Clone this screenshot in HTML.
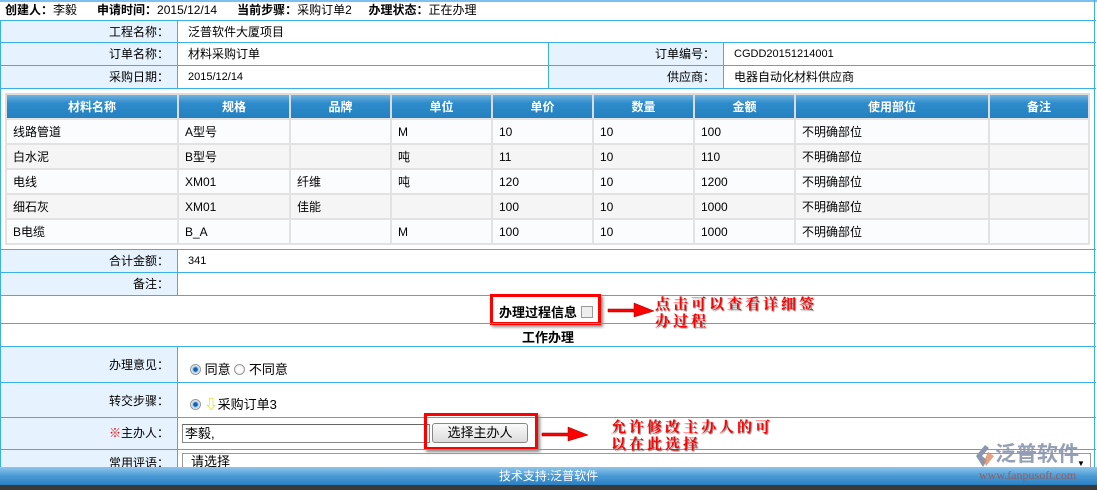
<!DOCTYPE html>
<html><head><meta charset="utf-8"><style>
*{margin:0;padding:0;box-sizing:border-box}
body{width:1097px;height:490px;overflow:hidden;background:#fff;font-family:"Liberation Sans","Noto Sans CJK SC","WenQuanYi Zen Hei",sans-serif;font-size:12px;color:#000;position:relative}
.a{position:absolute;white-space:nowrap}
.hl{position:absolute;left:0;width:1096px;height:1px;background:#3bb0e2}
.vl{position:absolute;width:1px;background:#3bb0e2}
.lab{position:absolute;background:#e6f2fd;text-align:right;padding-right:8px;line-height:22px}
.val{position:absolute;padding-left:10px;line-height:22px}
table{position:absolute;left:5px;top:93px;width:1085px;border-collapse:collapse;border:2px solid #dcdcdc}
th{height:25px;background:linear-gradient(#6fb3e0,#2f8ccc 35%,#2480bf);color:#fff;font-weight:bold;border-left:2px solid #dcdcdc;font-size:12px}
td{height:25px;border:2px solid #e2e2e2;padding-left:6px;font-size:12px}
tr:nth-child(even) td{background:#fbfcfe}
tr:nth-child(odd) td{background:#f5f5f5}
.red{position:absolute;border:3px solid #f00;box-shadow:2px 2px 3px #888}
.note{position:absolute;color:#f00;font-weight:bold;font-size:15px;letter-spacing:3px;line-height:17px;text-shadow:1px 1px 1px #888;font-family:"Noto Serif CJK SC",serif}
.radio{display:inline-block;width:11px;height:11px;border-radius:50%;border:1px solid #999;background:radial-gradient(circle,#fff 40%,#ddd);vertical-align:-1px}
.radio.on{background:radial-gradient(circle,#1a5fa8 30%,#8ec3ea 40%,#fff 75%)}
</style></head><body>
<div class="a" style="left:0;top:0;width:1097px;height:2px;background:#7cc0ee"></div>
<div class="a" style="left:5px;top:2px;line-height:16px;font-size:12px"><b>创建人：</b>李毅 &nbsp;&nbsp;&nbsp;&nbsp; <b>申请时间：</b>2015/12/14 &nbsp;&nbsp;&nbsp;&nbsp; <b>当前步骤：</b>采购订单2 &nbsp;&nbsp;&nbsp; <b>办理状态：</b>正在办理</div>

<div class="vl" style="left:0;top:20px;height:447px"></div>
<div class="vl" style="left:1094px;top:0;height:467px"></div>

<div class="lab" style="left:1px;top:21px;width:176px;height:21px">工程名称：</div>
<div class="lab" style="left:1px;top:43px;width:176px;height:22px">订单名称：</div>
<div class="lab" style="left:1px;top:66px;width:176px;height:22px">采购日期：</div>
<div class="lab" style="left:549px;top:43px;width:174px;height:22px">订单编号：</div>
<div class="lab" style="left:549px;top:66px;width:174px;height:22px">供应商：</div>
<div class="val" style="left:178px;top:21px">泛普软件大厦项目</div>
<div class="val" style="left:178px;top:43px">材料采购订单</div>
<div class="val" style="left:178px;top:66px;font-size:11px">2015/12/14</div>
<div class="val" style="left:724px;top:43px;font-size:11px">CGDD20151214001</div>
<div class="val" style="left:724px;top:66px">电器自动化材料供应商</div>
<div class="hl" style="top:20px"></div>
<div class="hl" style="top:42px"></div>
<div class="hl" style="top:65px"></div>
<div class="hl" style="top:88px"></div>
<div class="vl" style="left:177px;top:20px;height:68px"></div>
<div class="vl" style="left:548px;top:42px;height:46px"></div>
<div class="vl" style="left:723px;top:42px;height:46px"></div>

<table>
<tr><th style="width:172px">材料名称</th><th style="width:112px">规格</th><th style="width:101px">品牌</th><th style="width:101px">单位</th><th style="width:101px">单价</th><th style="width:101px">数量</th><th style="width:101px">金额</th><th style="width:194px">使用部位</th><th>备注</th></tr>
<tr><td>线路管道</td><td>A型号</td><td></td><td>M</td><td>10</td><td>10</td><td>100</td><td>不明确部位</td><td></td></tr>
<tr><td>白水泥</td><td>B型号</td><td></td><td>吨</td><td>11</td><td>10</td><td>110</td><td>不明确部位</td><td></td></tr>
<tr><td>电线</td><td>XM01</td><td>纤维</td><td>吨</td><td>120</td><td>10</td><td>1200</td><td>不明确部位</td><td></td></tr>
<tr><td>细石灰</td><td>XM01</td><td>佳能</td><td></td><td>100</td><td>10</td><td>1000</td><td>不明确部位</td><td></td></tr>
<tr><td>B电缆</td><td>B_A</td><td></td><td>M</td><td>100</td><td>10</td><td>1000</td><td>不明确部位</td><td></td></tr>
</table>

<div class="hl" style="top:249px"></div>
<div class="lab" style="left:1px;top:250px;width:176px;height:22px">合计金额：</div>
<div class="val" style="left:178px;top:250px;font-size:11px">341</div>
<div class="hl" style="top:272px"></div>
<div class="lab" style="left:1px;top:273px;width:176px;height:23px">备注：</div>
<div class="hl" style="top:295px"></div>
<div class="vl" style="left:177px;top:249px;height:46px"></div>

<div class="a" style="left:499px;top:302px;font-weight:bold;font-size:13px">办理过程信息 <span style="display:inline-block;width:12px;height:12px;border:1px solid #999;background:#eee;vertical-align:-1px"></span></div>
<div class="red" style="left:490px;top:294px;width:111px;height:31px"></div>
<div class="hl" style="top:323px"></div>
<div class="a" style="left:522px;top:327px;font-weight:bold;font-size:13px">工作办理</div>
<div class="hl" style="top:346px"></div>

<div class="lab" style="left:1px;top:347px;width:176px;height:35px;line-height:36px">办理意见：</div>
<div class="a" style="left:190px;top:359px;font-size:13px"><span class="radio on"></span> 同意 <span class="radio"></span> 不同意</div>
<div class="hl" style="top:382px"></div>
<div class="lab" style="left:1px;top:383px;width:176px;height:35px;line-height:36px">转交步骤：</div>
<div class="a" style="left:190px;top:394px;font-size:13px"><span class="radio on"></span> <span style="color:#dd0;font-weight:bold">⇩</span>采购订单3</div>
<div class="hl" style="top:417px"></div>
<div class="lab" style="left:1px;top:418px;width:176px;height:31px;line-height:30px"><span style="color:red">※</span>主办人：</div>
<div class="a" style="left:182px;top:424px;width:248px;height:19px;border:1px solid #888;border-top-color:#666;background:#fff;font-size:13px;padding-left:2px;line-height:17px">李毅,</div>
<div class="a" style="left:432px;top:423px;width:96px;height:20px;border:1px solid #888;border-radius:3px;background:linear-gradient(#fafafa,#dcdcdc);text-align:center;line-height:18px;font-size:13px">选择主办人</div>
<div class="red" style="left:424px;top:413px;width:114px;height:37px"></div>
<div class="hl" style="top:449px"></div>
<div class="lab" style="left:1px;top:450px;width:176px;height:17px;line-height:26px">常用评语：</div>
<div class="a" style="left:182px;top:453px;width:909px;height:14px;border:1px solid #999;border-bottom:none;padding-left:8px;font-size:13px;line-height:16px;overflow:hidden">请选择</div>
<div class="vl" style="left:177px;top:346px;height:121px"></div>

<svg class="a" style="left:606px;top:300px" width="50" height="20"><path d="M2 9 L28 9 L28 3 L48 11 L28 17 L28 12 L2 12Z" fill="#f00" stroke="#900" stroke-width=".5"/></svg>
<div class="note" style="left:655px;top:295px">点击可以查看详细签<br>办过程</div>
<svg class="a" style="left:540px;top:424px" width="50" height="20"><path d="M2 9 L28 9 L28 3 L48 11 L28 17 L28 12 L2 12Z" fill="#f00" stroke="#900" stroke-width=".5"/></svg>
<div class="note" style="left:611px;top:418px">允许修改主办人的可<br>以在此选择</div>

<div class="a" style="left:0;top:467px;width:1097px;height:18px;background:linear-gradient(#8fc6ec,#4a9ad4 50%,#2b7fc2);color:#fff;text-align:center;line-height:18px;font-size:12px">技术支持:泛普软件</div>
<div class="a" style="left:0;top:485px;width:1097px;height:5px;background:#3a3a3a"></div>

<svg class="a" style="left:973px;top:444px" width="22" height="24"><path d="M12 1 L3 12 L10 23 L14 16 L9 12 L16 4Z" fill="#8a96b0"/><path d="M15 8 L21 12 L13 22 L11 17Z" fill="#e08a60" opacity=".8"/></svg>
<div class="a" style="left:995px;top:443px;font-size:21px;line-height:24px;color:#8a96b0;opacity:.9;font-weight:bold">泛普软件</div>
<div class="a" style="left:979px;top:468px;font-size:12px;line-height:14px;color:#9a5a5a;font-family:'Liberation Serif',serif">www.fanpusoft.com</div>
<div class="a" style="left:1077px;top:459px;font-size:8px">▼</div>
</body></html>
